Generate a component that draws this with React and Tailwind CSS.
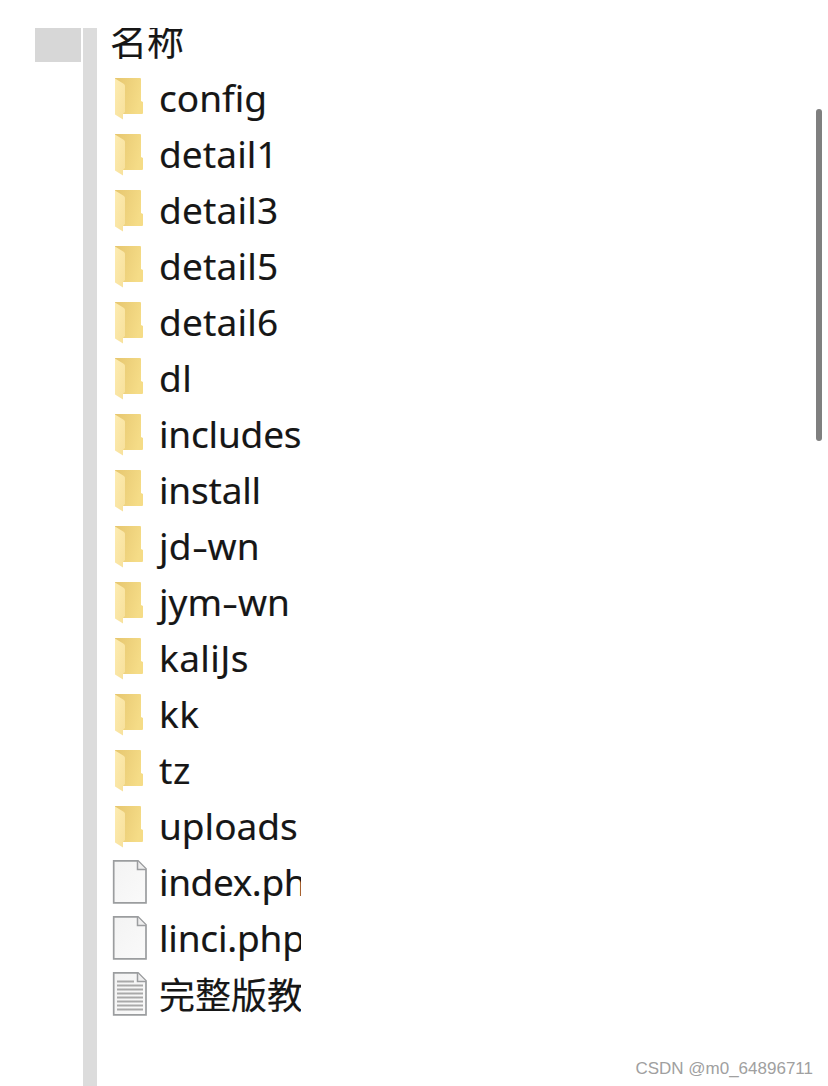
const folders = [
  ['config', 'tracking-[0px]'],
  ['detail1', 'tracking-[0.1px]'],
  ['detail3', 'tracking-[0.2px]'],
  ['detail5', 'tracking-[0.2px]'],
  ['detail6', 'tracking-[0.2px]'],
  ['dl', 'tracking-[0.5px]'],
  ['includes', 'tracking-[-0.2px]'],
  ['install', 'tracking-[-0.2px]'],
  ['jd-wn', 'tracking-[0.1px]'],
  ['jym-wn', 'tracking-[0px]'],
  ['kaliJs', 'tracking-[0.4px]'],
  ['kk', 'tracking-[0.5px]'],
  ['tz', 'tracking-[0.6px]'],
  ['uploads', 'tracking-[0px]'],
];

function FolderIcon() {
  return (
    <svg className="h-[44px] w-[36px] shrink-0" viewBox="0 0 36 44">
      <defs>
        <linearGradient id="back" x1="0" y1="0" x2="1" y2="0.3">
          <stop offset="0" stopColor="#e6c66f" />
          <stop offset="1" stopColor="#f5dc87" />
        </linearGradient>
        <linearGradient id="front" x1="0" y1="0" x2="1" y2="1">
          <stop offset="0" stopColor="#fdecb2" />
          <stop offset="1" stopColor="#f7e09a" />
        </linearGradient>
      </defs>
      <path d="M3 2h25q1 0 1 1v22l2 1v11q0 1-1 1H10L3 34z" fill="url(#back)" />
      <path d="M3 2.500L12 8q1 1 1 2v26l-2 2v5.500L3 38.500z" fill="url(#front)" />
    </svg>
  );
}

function FileIcon({ lined }) {
  return (
    <svg className="h-[44px] w-[36px] shrink-0" viewBox="0 0 36 44">
      <defs>
        <linearGradient id="paper" x1="0" y1="0" x2="1" y2="1">
          <stop offset="0" stopColor="#f3f3f3" />
          <stop offset="1" stopColor="#fafafa" />
        </linearGradient>
      </defs>
      <path d="M1.700 .8H26l8 8v34H1.700z" fill="url(#paper)" stroke="#9b9d9f" strokeWidth="1.700" />
      <path d="M25.500 1v8.500H34" fill="#eee" stroke="#9b9d9f" strokeWidth="1.500" />
      {lined && (
        <path
          d="M5 9.500h17M5 13.500h26M5 17.500h26M5 21.500h26M5 25.500h26M5 29.500h26M5 33.500h26M5 37.500h26"
          stroke="#a9a9a9"
          strokeWidth="1.800"
        />
      )}
    </svg>
  );
}

function Name({ text }) {
  const [head, tail] = text.split('-');
  if (tail === undefined) return text;
  return (
    <>
      {head}
      <span className="mx-[2px] inline-block scale-x-[1.35]">-</span>
      {tail}
    </>
  );
}

function Row({ icon, name, className = '' }) {
  return (
    <li className="flex h-[56px] items-center gap-[11px] pl-[15px]">
      {icon}
      <span className={`whitespace-nowrap ${className}`}>
        <Name text={name} />
      </span>
    </li>
  );
}

export default function App() {
  return (
    <div className="flex h-[1086px] w-[828px] overflow-hidden bg-white pt-[28px] font-['Noto_Sans','Noto_Sans_CJK_SC',sans-serif] text-[37px] text-[#161616]">
      <aside className="ml-[35px] h-[34px] w-[46px] shrink-0 bg-[#d7d7d7]" />
      <div className="ml-[2px] w-[14px] shrink-0 bg-[#dcdcdc]" />
      <main className="h-[990px] w-[204px] shrink-0 overflow-hidden [-webkit-text-stroke:0.150px_#161616]">
        <div className="flex h-[42px] items-center overflow-hidden pl-[13px]">
          <span className="-mt-[19px] leading-[56px] font-['Noto_Sans_CJK_SC',sans-serif]">名称</span>
        </div>
        <ul className="leading-[56px]">
          {folders.map(([name, tracking]) => (
            <Row key={name} icon={<FolderIcon />} name={name} className={tracking} />
          ))}
          <Row icon={<FileIcon />} name="index.php" className="tracking-[-0.4px]" />
          <Row icon={<FileIcon />} name="linci.php" className="tracking-[-0.2px]" />
          <Row icon={<FileIcon lined />} name="完整版教程" className="-mt-[2px] text-[36px] font-['Noto_Sans_CJK_SC',sans-serif]" />
        </ul>
      </main>
      <div className="flex flex-1 flex-col items-end justify-between">
        <div className="mt-[81px] mr-[6px] h-[332px] w-[6px] rounded-full bg-[#7f7f7f]" />
        <p className="mr-[15px] mb-[6px] font-['Liberation_Sans',sans-serif] text-[17px] leading-[22px] text-[#a0a0a0]">CSDN @m0_64896711</p>
      </div>
    </div>
  );
}
